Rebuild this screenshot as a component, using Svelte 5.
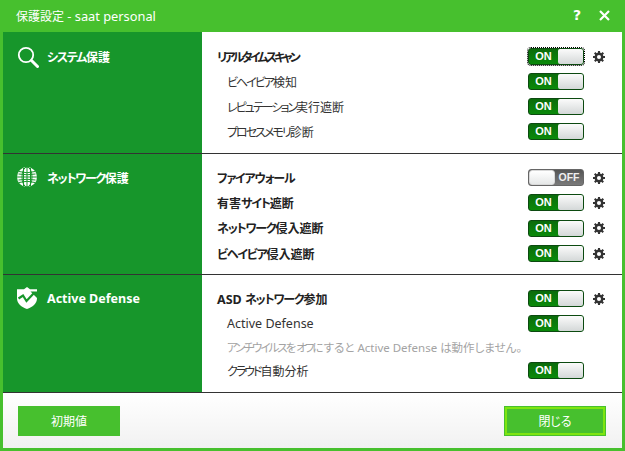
<script>
  const sections = [
    {
      title: 'システム保護',
      icon: 'search',
      cls: 'sys',
      rows: [
        { label: 'リアルタイムスキャン', bold: true, tight: true, on: true, gear: true, focus: true },
        { label: 'ビヘイビア検知', sub: true, on: true },
        { label: 'レピュテーション実行遮断', sub: true, on: true },
        { label: 'プロセスメモリ診断', sub: true, on: true }
      ]
    },
    {
      title: 'ネットワーク保護',
      icon: 'globe',
      cls: 'net',
      rows: [
        { label: 'ファイアウォール', bold: true, on: false, gear: true },
        { label: '有害サイト遮断', bold: true, on: true, gear: true },
        { label: 'ネットワーク侵入遮断', bold: true, on: true, gear: true },
        { label: 'ビヘイビア侵入遮断', bold: true, on: true, gear: true }
      ]
    },
    {
      title: 'Active Defense',
      icon: 'shield',
      cls: 'def',
      rows: [
        { label: 'ASD ネットワーク参加', bold: true, on: true, gear: true },
        { label: 'Active Defense', sub: true, on: true },
        { label: 'アンチウイルスをオフにすると Active Defense は動作しません。', note: true },
        { label: 'クラウド自動分析', sub: true, on: true }
      ]
    }
  ];

  // katakana and latin runs get their own spacing and size
  function runs(text) {
    return text.split(/([\u30A0-\u30FF]+|[A-Za-z][A-Za-z ]*)/).filter(Boolean).map((t) => ({
      t,
      kind: /^[\u30A0-\u30FF]/.test(t) ? 'kana' : /^[A-Za-z]/.test(t) ? 'latin' : 'other'
    }));
  }
</script>

<div class="window">
  <header class="titlebar">
    <span class="title"><span class="title-ja">保護設定</span> - saat personal</span>
    <span class="help">?</span>
    <svg class="close" viewBox="0 0 11 11" width="11" height="11">
      <path d="M1 1l9 9M10 1l-9 9" stroke="#fff" stroke-width="2.200" fill="none" />
    </svg>
  </header>

  <main class="body">
    {#each sections as s}
      <section class="section {s.cls}">
        <div class="side">
          {#if s.icon === 'search'}
            <svg class="icon" viewBox="0 0 22 22" width="22" height="22">
              <circle cx="9" cy="9" r="7.200" fill="none" stroke="#fff" stroke-width="1.800" />
              <path d="M14.500 14.500l6 6" stroke="#fff" stroke-width="3" stroke-linecap="round" />
            </svg>
          {:else if s.icon === 'globe'}
            <svg class="icon" viewBox="0 0 22 20" width="22" height="20">
              <circle cx="10" cy="10" r="10" fill="#fff" />
              <g fill="none" stroke="#17962b" stroke-width="1">
                <ellipse cx="10" cy="10" rx="5" ry="10" />
                <path d="M10 0v20M0 10h20M2 4.500q8 2.500 16 0M2 15.500q8-2.500 16 0M1.500 7q8.500 1.500 17 0M1.500 13q8.500-1.500 17 0M6.500 1v18M13.500 1v18" />
              </g>
            </svg>
          {:else}
            <svg class="icon" viewBox="0 0 22 22" width="22" height="22">
              <path d="M10 0l3 2.200h7v9C20 16.500 15.500 20 10 22 4.500 20 0 16.500 0 11.200v-9h7z" fill="#fff" />
              <path d="M1.500 11.500l4.500-3 3.500 5.500 8-8.500" fill="none" stroke="#17962b" stroke-width="2.200" />
              <path d="M13.500 4.500h6.500v6.500z" fill="#17962b" />
            </svg>
          {/if}
          <span class="side-title">
            {#each runs(s.title) as run}<span class={run.kind}>{run.t}</span>{/each}
          </span>
        </div>
        <div class="rows">
          {#each s.rows as r}
            <div class="row" class:note={r.note}>
              <span class="label" class:bold={r.bold} class:tight={r.tight} class:sub={r.sub} class:grey={r.note}>
                {#each runs(r.label) as run}<span class={run.kind}>{run.t}</span>{/each}
              </span>
              {#if !r.note}
                <span class="toggle" class:on={r.on} class:off={!r.on} class:focus={r.focus}>
                  <span class="state">{r.on ? 'ON' : 'OFF'}</span>
                  <span class="knob"></span>
                </span>
                <span class="gear-slot">
                  {#if r.gear}
                    <svg viewBox="0 0 16 16" width="12" height="12">
                      <g stroke="#333" fill="none">
                        <circle cx="8" cy="8" r="4.300" stroke-width="3.200" />
                        <path d="M8 0v16M0 8h16M2.300 2.300l11.400 11.400M13.700 2.300L2.300 13.700" stroke-width="2.800" stroke-dasharray="3.200 9.600" />
                      </g>
                    </svg>
                  {/if}
                </span>
              {/if}
            </div>
          {/each}
        </div>
      </section>
    {/each}
  </main>

  <footer class="footer">
    <button class="btn">初期値</button>
    <button class="btn primary">閉じる</button>
  </footer>
</div>

<style>
  :global(body) {
    margin: 0;
    background: #47c02e;
  }

  .window {
    width: 625px;
    height: 451px;
    box-sizing: border-box;
    display: flex;
    flex-direction: column;
    background: #47c02e;
    padding: 0 3px 3px;
    font-family: "Noto Sans", "Noto Sans CJK JP", sans-serif;
    font-feature-settings: "palt";
    overflow: hidden;
  }

  .titlebar {
    height: 32px;
    display: flex;
    align-items: center;
    padding: 0 12px 0 13px;
    color: #fff;
    flex: none;
  }

  .title {
    flex: 1;
    font-size: 12.800px;
    font-weight: 400;
  }

  .title-ja {
    font-size: 12px;
  }

  .help {
    font-family: "DejaVu Sans", sans-serif;
    font-size: 14px;
    font-weight: 700;
    margin-right: 18px;
    margin-top: -2px;
  }

  .close {
    margin-top: -2px;
  }

  .body {
    flex: none;
    background: #fff;
  }

  .section {
    display: flex;
    border-bottom: 1px solid #333;
    box-sizing: border-box;
  }

  .section.sys { height: 122px; }
  .section.net { height: 121px; }
  .section.def { height: 118px; }

  .side {
    width: 199px;
    background: #17962b;
    display: flex;
    align-items: flex-start;
    padding: 14px 0 0 14px;
    box-sizing: border-box;
    gap: 8px;
    flex: none;
  }

  .net .side { padding-top: 13px; }
  .def .side { padding-top: 12px; }

  .icon {
    flex: none;
  }

  .side-title {
    color: #fff;
    font-size: 12px;
    font-weight: 700;
    line-height: 24px;
  }

  .side-title .kana {
    letter-spacing: -1.300px;
  }

  .side-title .latin {
    font-size: 12.500px;
  }

  .rows {
    flex: 1;
    display: flex;
    flex-direction: column;
    padding: 12px 0 0 15px;
  }

  .net .rows,
  .def .rows {
    padding-top: 11px;
  }

  .row {
    height: 25px;
    display: flex;
    align-items: center;
  }

  .net .row {
    height: 25.330px;
  }

  .row.note {
    height: 22px;
  }

  .label {
    flex: 1;
    font-size: 12px;
    color: #333;
    white-space: nowrap;
  }

  .label .latin {
    font-size: 12.500px;
  }

  .label .kana {
    letter-spacing: -2px;
  }

  .label.bold {
    font-weight: 700;
    color: #222;
  }

  .label.bold .kana {
    letter-spacing: -1.200px;
  }

  .label.bold.tight .kana {
    letter-spacing: -2.800px;
  }

  .label.sub {
    padding-left: 10px;
  }

  .label.grey {
    padding-left: 10px;
    font-size: 11.500px;
    color: #a3a3a3;
  }

  .label.grey .latin {
    font-size: 11.500px;
  }

  .toggle {
    width: 56px;
    height: 17px;
    box-sizing: border-box;
    border-radius: 3px;
    display: flex;
    align-items: center;
    flex: none;
  }

  .toggle.on {
    background: linear-gradient(#0b6b0b, #0a8a0a);
    border: 1px solid #0c4a10;
  }

  .toggle.off {
    background: linear-gradient(#555, #7a7a7a);
    border: 1px solid #666;
    flex-direction: row-reverse;
  }

  .toggle.off .knob {
    border: 1px solid #d8d8d8;
    border-radius: 3px;
    background: linear-gradient(#fff, #e6e8e8);
    width: 26px;
  }

  .toggle.off .state {
    font-size: 10.500px;
    color: #eee;
  }

  .toggle.focus {
    outline: 1px dotted #000;
  }

  .state {
    flex: 1;
    text-align: center;
    color: #fff;
    font-family: "Liberation Sans", sans-serif;
    font-size: 11px;
    font-weight: 700;
    line-height: 15px;
  }

  .knob {
    width: 25px;
    height: 15px;
    box-sizing: border-box;
    background: linear-gradient(#fbfbfb, #d4d8d8);
    border-radius: 2px;
    flex: none;
  }

  .gear-slot {
    width: 38px;
    flex: none;
    display: flex;
    align-items: center;
    padding-left: 9px;
    box-sizing: border-box;
  }

  .footer {
    flex: 1;
    display: flex;
    justify-content: space-between;
    align-items: flex-start;
    padding: 13px 16px 0 15px;
    background: linear-gradient(#ffffff, #f1f1f1);
  }

  .btn {
    width: 102px;
    height: 30px;
    box-sizing: border-box;
    border: none;
    background: #47c02e;
    color: #fff;
    font-family: "Noto Sans CJK JP", sans-serif;
    font-feature-settings: "palt";
    font-size: 12px;
    padding: 0 0 1px;
  }

  .btn.primary {
    border: 3px solid #7ee510;
    outline: 1px solid #47c02e;
    outline-offset: -1px;
  }
</style>
